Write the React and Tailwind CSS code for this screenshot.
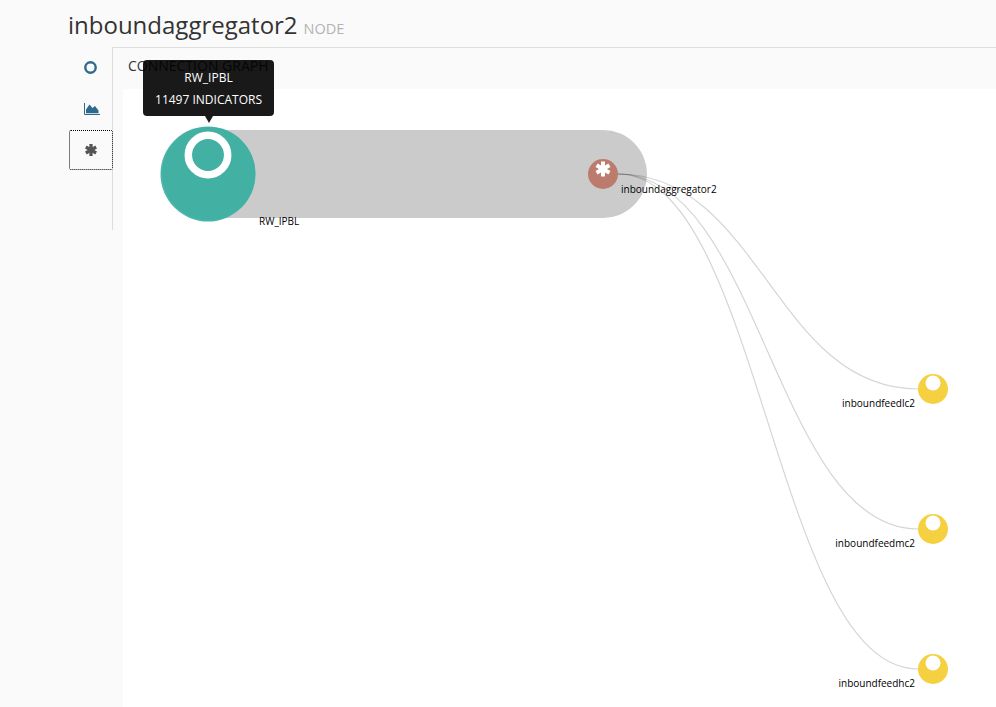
import React from "react";

const feeds = [
  { name: "inboundfeedlc2", y: 389 },
  { name: "inboundfeedmc2", y: 529 },
  { name: "inboundfeedhc2", y: 669 },
];

// chunky six arm asterisk, same shape in the tab and on the node
const Asterisk = ({ cx, cy, size, color }) => (
  <g stroke={color} strokeWidth={size * 0.27}>
    <line x1={cx} y1={cy - size / 2} x2={cx} y2={cy + size / 2} />
    <line x1={cx - size * 0.43} y1={cy - size / 4} x2={cx + size * 0.43} y2={cy + size / 4} />
    <line x1={cx - size * 0.43} y1={cy + size / 4} x2={cx + size * 0.43} y2={cy - size / 4} />
  </g>
);

const ConnectionGraph = () => (
  <svg viewBox="123 89 873 618" className="block w-[873px] h-[618px]">
    {/* link between source and aggregator */}
    <path d="M208 130 L603 130 A44 44 0 0 1 603 218 L208 218 Z" fill="#cbcbcb" />

    <circle cx="208" cy="174" r="47.5" fill="#4db6aa" />
    <circle cx="208.7" cy="173.6" r="46.6" fill="#42b1a4" />
    <circle cx="208" cy="155" r="19.7" fill="none" stroke="#ffffff" strokeWidth="7.5" />
    <text x="259" y="225" fontSize="10" fill="#000000">RW_IPBL</text>

    <circle cx="603" cy="174" r="15" fill="#bd7b6e" />
    <Asterisk cx={603} cy={169} size={15} color="#ffffff" />

    {feeds.map((f) => (
      <g key={f.name}>
        <circle cx="933" cy={f.y} r="15" fill="#f5d040" />
        <circle cx="933" cy={f.y - 6} r="7.5" fill="#ffffff" />
        <path
          d={`M618 174 C760 174 775 ${f.y} 918 ${f.y}`}
          fill="none"
          stroke="#000000"
          strokeOpacity="0.17"
          strokeWidth="1.2"
        />
        <text x="915" y={f.y + 18} textAnchor="end" fontSize="10" fill="#000000">{f.name}</text>
      </g>
    ))}

    <text x="621" y="193" fontSize="10" fill="#000000">inboundaggregator2</text>
  </svg>
);

export default function App() {
  return (
    <div className="relative w-[996px] h-[707px] overflow-hidden bg-[#fafafa] font-['Open_Sans',sans-serif]">
      <div className="flex items-baseline gap-[6px] h-[47px] pl-[68px] pt-[8px]">
        <h1 className="text-[24px] leading-[33px] text-[#333333]">inboundaggregator2</h1>
        <span className="text-[14.5px] text-[#b3b3b3]">NODE</span>
      </div>

      <div className="flex pl-[68px]">
        <div className="w-[45px] shrink-0 flex flex-col">
          <div className="h-[41px] flex items-center justify-center pl-[1px] border-r border-[#dddddd]">
            <svg viewBox="0 0 13 13" className="w-[13px] h-[13px]">
              <circle cx="6.5" cy="6.5" r="5.2" fill="none" stroke="#2e6a8e" strokeWidth="2.4" />
            </svg>
          </div>
          <div className="h-[42px] flex items-center justify-center pl-[3px] border-r border-[#dddddd]">
            <svg viewBox="0 0 16 12" className="w-[16px] h-[12px]">
              <path d="M0.5 0 V11.5 H16" fill="none" stroke="#2e6a8e" strokeWidth="1" />
              <path d="M2 10.2 V6.5 L5.5 1.5 L8.5 5 L11 3 L14.5 7.5 V10.2 Z" fill="#2e6a8e" />
            </svg>
          </div>
          <div className="ml-[1px] h-[40px] flex items-center justify-center bg-[#fafafa] border border-dotted border-black rounded-[2px]">
            <svg viewBox="0 0 12 12" className="w-[12px] h-[12px]">
              <Asterisk cx={6} cy={6} size={12} color="#555555" />
            </svg>
          </div>
          <div className="h-[60px] border-r border-[#dddddd]" />
        </div>

        <div className="flex-1 border-t border-[#dddddd]">
          <div className="h-[41px] pl-[15px] pt-[8px] text-[14px] leading-[19px] text-[#333333]">CONNECTION GRAPH</div>
          <div className="ml-[10px] bg-white h-[618px]">
            <ConnectionGraph />
          </div>
        </div>
      </div>

      {/* tooltip over the source node, heading shows through it */}
      <div className="absolute left-[143px] top-[60px] w-[131px] h-[56px] rounded-[4px] bg-black/90 text-white text-[12px] leading-[22px] text-center pt-[7px]">
        <div>RW_IPBL</div>
        <div>11497 INDICATORS</div>
        <div className="absolute left-1/2 -translate-x-1/2 top-full w-0 h-0 border-x-[4px] border-x-transparent border-t-[7px] border-t-black/90" />
      </div>
    </div>
  );
}
